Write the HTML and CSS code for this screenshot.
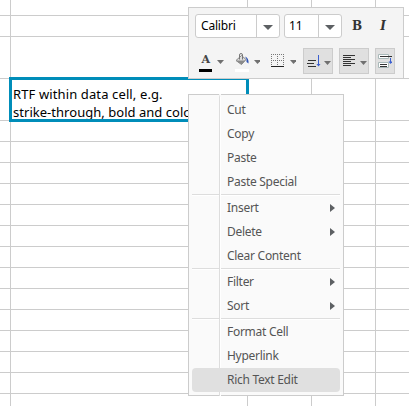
FILE: index.html
```html
<!DOCTYPE html>
<html lang="en">
<head>
<meta charset="utf-8">
<title>Spreadsheet context menu</title>
<link rel="stylesheet" href="styles.css">
</head>
<body>
<main class="sheet">
  <div class="row first"><i></i><i></i><i></i><i></i><i></i></div>
  <div class="row"><i></i><i></i><i></i><i></i><i></i></div>
  <div class="row tall"><i></i><i></i><i></i><i></i><i></i></div>
  <div class="row tall"><i></i><div class="cell"><div class="selected">RTF within data cell, e.g.<br><span class="line2">strike-through, bold and color</span></div></div><i></i><i></i><i></i></div>
  <div class="row"><i></i><i></i><i></i><i></i><i></i></div>
  <div class="row"><i></i><i></i><i></i><i></i><i></i></div>
  <div class="row"><i></i><i></i><i></i><i></i><i></i></div>
  <div class="row"><i></i><i></i><i></i><i></i><i></i></div>
  <div class="row"><i></i><i></i><i></i><i></i><i></i></div>
  <div class="row"><i></i><i></i><i></i><i></i><i></i></div>
  <div class="row"><i></i><i></i><i></i><i></i><i></i></div>
  <div class="row"><i></i><i></i><i></i><i></i><i></i></div>
  <div class="row"><i></i><i></i><i></i><i></i><i></i></div>
  <div class="row"><i></i><i></i><i></i><i></i><i></i></div>
  <div class="row"><i></i><i></i><i></i><i></i><i></i></div>
  <div class="row"><i></i><i></i><i></i><i></i><i></i></div>
  <div class="row"><i></i><i></i><i></i><i></i><i></i></div>
  <div class="row"><i></i><i></i><i></i><i></i><i></i></div>
</main>

<div class="toolbar">
  <div class="line fonts">
    <div class="combo font"><span class="value">Calibri</span><span class="drop"><svg width="10" height="5"><path d="M0 0H10L5 5Z"/></svg></span></div>
    <div class="combo size"><span class="value">11</span><span class="drop"><svg width="10" height="5"><path d="M0 0H10L5 5Z"/></svg></span></div>
    <div class="style bold">B</div>
    <div class="style italic">I</div>
  </div>
  <div class="line tools">
    <div class="tool"><span class="letter">A</span><svg class="tip" width="7" height="4"><path d="M0 0H7L3.5 4Z"/></svg></div>
    <div class="tool">
      <svg class="icon" width="14" height="19" viewBox="0 0 14 19">
        <path d="M6.500 2.500L11 6.500L6.500 11.500L1 7.500Z" fill="#dcdcdc" stroke="#858585"/>
        <path d="M1 7.500H10.500L6.500 11.500Z" fill="#8b8b8b"/>
        <path d="M4.500 6.500V2Q4.500 .5 6 .5T7.500 2V6.500" fill="none" stroke="#777"/>
        <path d="M10 3.500Q14 5 13.500 10.500L11.500 9V6Z" fill="#3155b5"/>
        <path d="M0 16H14V19H0Z" fill="#fff"/>
      </svg>
      <svg class="tip" width="7" height="4"><path d="M0 0H7L3.5 4Z"/></svg>
    </div>
    <div class="tool">
      <svg class="icon" width="14" height="19" viewBox="0 0 14 19">
        <path d="M.5 1V13M6.500 1V13M12.500 1V13M0 1.500H13M0 7.500H13" fill="none" stroke="#777" stroke-dasharray="1 1"/>
        <path d="M0 13H13V14H0Z" fill="#222"/>
      </svg>
      <svg class="tip" width="7" height="4"><path d="M0 0H7L3.5 4Z"/></svg>
    </div>
    <div class="tool on">
      <svg class="icon" width="14" height="19" viewBox="0 0 14 19">
        <path d="M1 7.500H9M0 10.500H7M1 13.500H9" stroke="#333"/>
        <path d="M11.500 2V13" stroke="#3b5fd0"/><path d="M9.500 11H13.500L11.500 13.500Z" fill="#3b5fd0"/>
      </svg>
      <svg class="tip" width="7" height="4"><path d="M0 0H7L3.5 4Z"/></svg>
    </div>
    <div class="tool on">
      <svg class="icon" width="14" height="19" viewBox="0 0 14 19">
        <path d="M0 2.500H12M0 4.500H8M0 6.500H12M0 8.500H8M0 10.500H12M0 12.500H8" stroke="#333"/>
      </svg>
      <svg class="tip" width="7" height="4"><path d="M0 0H7L3.5 4Z"/></svg>
    </div>
    <div class="tool on wrap">
      <svg width="14" height="14" viewBox="0 0 14 14">
        <path d="M.5 .5H10.500V4.500H.5ZM.5 8.500H10.500V13.500H.5Z" fill="#fff" stroke="#a9b9b9"/>
        <path d="M2 2.500H14M2 10.500H9M2 12.500H9" stroke="#333"/>
        <path d="M12.500 4V9" stroke="#3b5fd0"/><path d="M10.500 7.500H14.500L12.500 10Z" fill="#3b5fd0"/>
      </svg>
    </div>
  </div>
</div>

<nav class="menu">
  <div class="gutter"></div>
  <div class="item">Cut</div>
  <div class="item">Copy</div>
  <div class="item">Paste</div>
  <div class="item">Paste Special</div>
  <div class="sep"></div>
  <div class="item sub">Insert</div>
  <div class="item sub">Delete</div>
  <div class="item">Clear Content</div>
  <div class="sep"></div>
  <div class="item sub">Filter</div>
  <div class="item sub">Sort</div>
  <div class="sep"></div>
  <div class="item">Format Cell</div>
  <div class="item">Hyperlink</div>
  <div class="item active">Rich Text Edit</div>
</nav>
</body>
</html>
```
FILE: styles.css
```css
* { box-sizing: border-box; }
body {
  margin: 0;
  width: 409px;
  height: 406px;
  overflow: hidden;
  position: relative;
  background: #fff;
  font: 12px "Noto Sans", sans-serif;
}
.sheet { height: 406px; overflow: hidden; }
.row {
  display: grid;
  grid-template-columns: 11px 237px 64px 64px 33px;
  height: 21px;
}
.row.first { height: 16px; }
.row.tall { height: 42px; }
.row > * {
  border-right: 1px solid #ccc;
  border-bottom: 1px solid #ccc;
}
.row > :last-child { border-right: 0; }
.cell { position: relative; }
.selected {
  position: absolute;
  left: -2px;
  top: -2px;
  width: 240px;
  height: 45px;
  padding: 5px 0 0 1px;
  border: 3px solid #008db9;
  background: #fff;
  overflow: hidden;
  white-space: nowrap;
  color: #000;
  font-size: 13px;
  line-height: 18px;
  letter-spacing: 0.12px;
}
.line2 { letter-spacing: 0.03px; }

.toolbar {
  position: absolute;
  left: 188px;
  top: 7px;
  width: 216px;
  height: 72px;
  padding: 6px;
  border: 1px solid #ccc;
  background: #f4f4f4;
}
.line { display: flex; }
.fonts { gap: 4px; height: 24px; }
.combo {
  display: flex;
  height: 24px;
  border: 1px solid #ccc;
  border-radius: 3px;
  background: #fff;
  line-height: 22px;
  color: #000;
  letter-spacing: -0.2px;
}
.font { width: 85px; }
.size { width: 58px; }
.value { flex: 1; padding-left: 5px; }
.size .value { padding-left: 4px; }
.drop {
  width: 23px;
  border-left: 1px solid #ccc;
  display: flex;
  align-items: center;
  justify-content: center;
  padding-top: 2px;
}
.drop svg { fill: #5d6063; }
.style {
  width: 22px;
  text-align: center;
  font: bold 12px/24px "DejaVu Serif", serif;
  color: #333;
}
.tools { margin-top: 10px; gap: 6px; }
.italic { font-style: italic; }
.tool {
  display: flex;
  width: 30px;
  height: 26px;
  padding: 4px 0 0 3px;
  border: 1px solid transparent;
}
.tool.on { border-color: #ccc; background: #e0e0e0; }
.tool.wrap { width: 20px; padding: 5px 0 0 2px; }
.tip { margin: 7px 0 0 5px; fill: #707070; }
.on .tip { margin-left: 3px; margin-top: 8px; }
.icon { flex: none; }
.letter {
  width: 14px;
  height: 19px;
  border-bottom: 3px solid #000;
  font: bold 11px/14px "DejaVu Serif", serif;
  text-align: center;
  color: #444;
}

.menu {
  position: absolute;
  left: 188px;
  top: 94px;
  width: 156px;
  height: 302px;
  padding: 3px;
  border: 1px solid #ccc;
  background: #fafafa;
  color: #555;
}
.gutter {
  position: absolute;
  left: 30px;
  top: -1px;
  width: 2px;
  height: 302px;
  border-top: 3px solid #fafafa;
  border-left: 1px solid #ddd;
  background: #fff;
}
.item {
  position: relative;
  display: flex;
  align-items: center;
  justify-content: space-between;
  height: 24px;
  padding: 0 5px 1px 35px;
  white-space: nowrap;
  letter-spacing: -0.28px;
}
.sub::after {
  content: "";
  border: 4.5px solid transparent;
  border-left: 5px solid #5d6063;
  border-right: 0;
}
.active { background: #e0e0e0; border-radius: 4px; }
.sep { height: 2px; background: #ddd; border-bottom: 1px solid #fff; }
```
